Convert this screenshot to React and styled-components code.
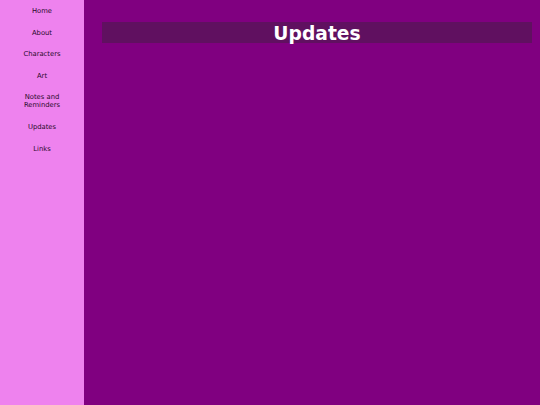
import React from 'react'
import styled, { createGlobalStyle } from 'styled-components'

const GlobalStyle = createGlobalStyle`
  html, body {
    margin: 0;
    padding: 0;
    height: 100%;
  }
  body {
    font-family: 'DejaVu Sans', Verdana, sans-serif;
  }
  #root {
    height: 100%;
  }
`

const Page = styled('div')`
  display: flex;
  height: 100vh;
`

const Sidebar = styled('nav')`
  width: 84px;
  flex-shrink: 0;
  background: #ee82ee;
  display: flex;
  flex-direction: column;
  align-items: center;
  padding-top: 7px;
  gap: 13.6px;
`

const NavLink = styled('a')`
  color: #2a0a2a;
  font-size: 6.8px;
  line-height: 8px;
  text-align: center;
  text-decoration: none;
  cursor: pointer;
`

const Main = styled('main')`
  flex: 1;
  background: #800080;
  padding: 22px 8px 0 18px;
`

const Header = styled('header')`
  background: #601060;
  height: 21px;
  display: flex;
  align-items: center;
  justify-content: center;
`

const Title = styled('h1')`
  margin: 0;
  padding-top: 2px;
  color: #ffffff;
  font-size: 18.7px;
  font-weight: bold;
  line-height: 21px;
`

const links = ['Home', 'About', 'Characters', 'Art', ['Notes and', 'Reminders'], 'Updates', 'Links']

export default () => (
  <>
    <GlobalStyle />
    <Page>
      <Sidebar>
        {links.map((link, i) => (
          <NavLink key={i}>
            {Array.isArray(link) ? <>{link[0]}<br />{link[1]}</> : link}
          </NavLink>
        ))}
      </Sidebar>
      <Main>
        <Header>
          <Title>Updates</Title>
        </Header>
      </Main>
    </Page>
  </>
)
